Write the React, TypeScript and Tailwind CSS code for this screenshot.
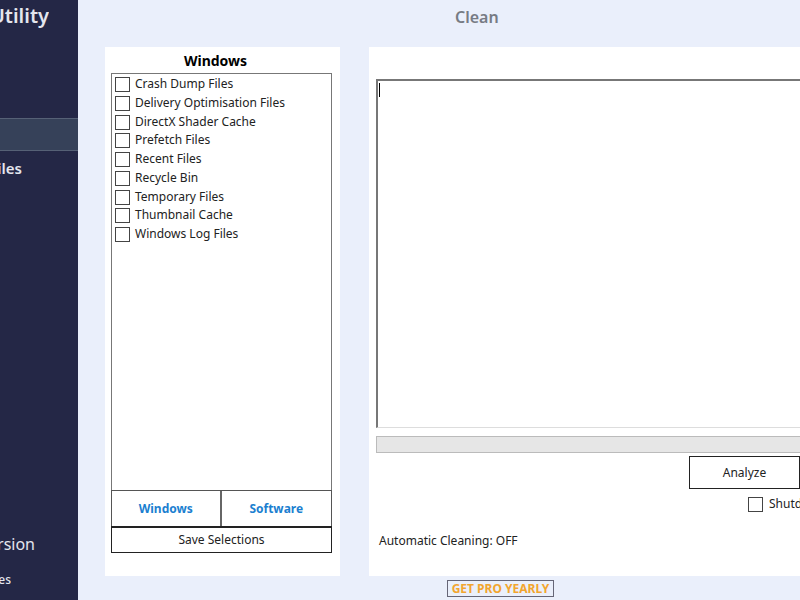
import { useState } from "react";

const WINDOWS_ITEMS = [
  "Crash Dump Files",
  "Delivery Optimisation Files",
  "DirectX Shader Cache",
  "Prefetch Files",
  "Recent Files",
  "Recycle Bin",
  "Temporary Files",
  "Thumbnail Cache",
  "Windows Log Files",
];

const CHECKBOX =
  "size-[15px] shrink-0 appearance-none border border-[#444] bg-white checked:bg-[#1979ca]";

function Sidebar() {
  return (
    <nav className="flex w-[78px] shrink-0 flex-col bg-[#242746] text-[#e4e6ee]">
      <div className="flex h-8 w-[49px] justify-end overflow-hidden text-xl font-semibold leading-8">
        Utility
      </div>
      <button
        type="button"
        aria-label="Clean"
        className="mt-[86px] h-[33px] border-y border-[#566176] bg-[#364159]"
      />
      <a
        href="#files"
        className="flex h-[34px] w-[22px] justify-end overflow-hidden text-[15px] font-semibold leading-[34px]"
      >
        Files
      </a>
      <a
        href="#version"
        className="mt-auto flex h-8 w-[35px] justify-end overflow-hidden text-base leading-8"
      >
        Version
      </a>
      <a
        href="#updates"
        className="mb-2 mt-2 flex h-6 w-[11px] justify-end overflow-hidden text-xs font-medium leading-6"
      >
        es
      </a>
    </nav>
  );
}

function CleanList() {
  const [tab, setTab] = useState("Windows");

  return (
    <section className="flex w-[235px] shrink-0 flex-col bg-white pb-[23px] pl-1.5 pr-2">
      <h2 className="h-[26px] pr-3 text-center text-sm font-bold leading-7 text-black">{tab}</h2>
      <div className="flex-1 border border-b-0 border-[#777] px-[3px]">
        <ul className="grid h-[169px] grid-rows-9">
          {WINDOWS_ITEMS.map((item) => (
            <li key={item}>
              <label className="flex gap-[5px]">
                <input type="checkbox" className={`${CHECKBOX} mt-[3px]`} />
                <span className="leading-5">{item}</span>
              </label>
            </li>
          ))}
        </ul>
      </div>
      <div className="grid h-9 grid-cols-2 border border-b-0 border-[#555] text-xs font-bold text-[#1b7fd0]">
        <button type="button" className="border-r-2 border-[#666]" onClick={() => setTab("Windows")}>
          Windows
        </button>
        <button type="button" onClick={() => setTab("Software")}>
          Software
        </button>
      </div>
      <button type="button" className="h-[27px] border border-t-2 border-[#222]">
        Save Selections
      </button>
    </section>
  );
}

function ResultPanel() {
  return (
    <section className="flex min-w-0 flex-1 flex-col overflow-hidden bg-white pl-[7px] pt-8">
      <div className="relative flex flex-1">
        <textarea
          aria-label="Results"
          className="w-full resize-none border-b border-l-2 border-t-2 border-b-[#ddd] border-l-[#777] border-t-[#777] bg-white p-1 outline-none"
        />
        <span className="absolute left-[3px] top-1 h-[14px] w-px bg-black" />
      </div>
      <div
        role="progressbar"
        aria-label="Progress"
        className="mt-2 h-[17px] shrink-0 border border-r-0 border-[#bbb] bg-[#e6e6e6]"
      />
      <div className="mt-[3px] flex flex-col items-end">
        <button type="button" className="h-[33px] w-[111px] border border-[#222]">
          Analyze
        </button>
        <label className="mt-[7px] flex w-[52px] items-center gap-[6px] whitespace-nowrap">
          <input type="checkbox" className={CHECKBOX} />
          Shutdown
        </label>
      </div>
      <p className="mb-[26px] mt-5 pl-[3px] leading-[18px]">Automatic Cleaning: OFF</p>
    </section>
  );
}

export default function App() {
  return (
    <div className="flex min-h-screen overflow-hidden bg-[#eaeffb] font-['Noto_Sans','Open_Sans',sans-serif] text-xs text-[#222]">
      <Sidebar />
      <main className="flex min-w-0 flex-1 flex-col pl-[27px]">
        <h1 className="h-[47px] pl-[350px] text-base font-semibold leading-[34px] text-[#777b84]">
          Clean
        </h1>
        <div className="flex flex-1 gap-[29px]">
          <CleanList />
          <ResultPanel />
        </div>
        <div className="flex h-6 items-center pl-[342px]">
          <button
            type="button"
            className="h-[17px] w-[107px] whitespace-nowrap border border-[#667] text-xs font-bold leading-[15px] text-[#f2a52f]"
          >
            GET PRO YEARLY
          </button>
        </div>
      </main>
    </div>
  );
}
